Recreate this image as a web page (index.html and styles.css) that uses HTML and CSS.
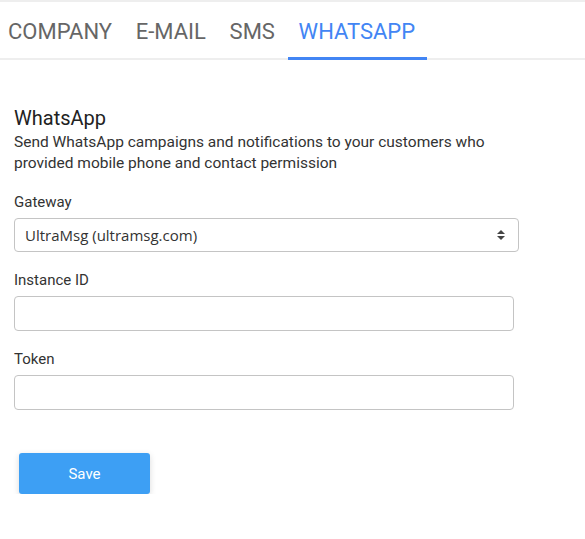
FILE: index.html
```html
<!DOCTYPE html>
<html>
<head>
<meta charset="utf-8">
<link rel="stylesheet" href="styles.css">
</head>
<body>
<div class="topline"></div>
<nav class="tabs">
  <a class="tab">COMPANY</a>
  <a class="tab">E-MAIL</a>
  <a class="tab">SMS</a>
  <a class="tab active">WHATSAPP</a>
</nav>
<main class="content">
  <h2 class="title">WhatsApp</h2>
  <p class="desc">Send WhatsApp campaigns and notifications to your customers who provided mobile phone and contact permission</p>
  <div class="field">
    <label class="label">Gateway</label>
    <div class="select">
      <span>UltraMsg (ultramsg.com)</span>
      <svg class="arrows" width="8" height="12" viewBox="0 0 8 12"><path d="M0 5 L4 1 L8 5 Z" fill="#444"/><path d="M0 7 L4 11 L8 7 Z" fill="#444"/></svg>
    </div>
  </div>
  <div class="field">
    <label class="label">Instance ID</label>
    <div class="input"></div>
  </div>
  <div class="field">
    <label class="label">Token</label>
    <div class="input"></div>
  </div>
  <button class="save">Save</button>
</main>
</body>
</html>
```

FILE: styles.css
```css
html, body { margin: 0; padding: 0; background: #fff; }
body { font-family: Roboto, "Liberation Sans", sans-serif; width: 585px; }
.topline { height: 2px; background: #eeeeee; }
.tabs {
  display: flex;
  height: 56px;
  border-bottom: 2px solid #eeeeee;
  padding-left: 0;
  margin-left: -3px;
}
.tab {
  display: flex;
  align-items: center;
  padding: 0 11px;
  margin-right: 1.7px;
  font-size: 22px;
  color: #666;
  position: relative;
  top: 2px;
  height: 56px;
  box-sizing: border-box;
  border-bottom: 3px solid transparent;
  padding-top: 1px;
}
.tab.active { color: #4285f4; border-bottom-color: #4285f4; padding-right: 11.5px; }
.content { padding: 46px 14px 0 14px; }
.title { margin: 0; font-size: 20px; font-weight: 400; color: #222; line-height: 24px; }
.desc { margin: 2px 0 0; font-size: 15.5px; color: #333; line-height: 21px; width: 520px; }
.field { margin-top: 18px; }
.label { display: block; font-family: Roboto, sans-serif; font-size: 15px; color: #333; line-height: 20px; margin-bottom: 6px; }
.select {
  width: 505px; height: 34px; box-sizing: border-box;
  border: 1px solid #c4c4c4; border-radius: 4px;
  display: flex; align-items: center; justify-content: space-between;
  padding: 0 13px 0 10px;
  font-family: "Open Sans", sans-serif; font-size: 15px; color: #333;
}
.input {
  width: 500px; height: 35px; box-sizing: border-box;
  border: 1px solid #c4c4c4; border-radius: 4px;
}
.save {
  margin: 43px 0 0 5px;
  width: 131px; height: 41px;
  background: #3d9ff4; color: #fff; border: none; border-radius: 3px;
  font-family: Roboto, sans-serif; font-size: 15px;
  box-shadow: 0 2px 6px rgba(0,0,0,0.15);
}
```
